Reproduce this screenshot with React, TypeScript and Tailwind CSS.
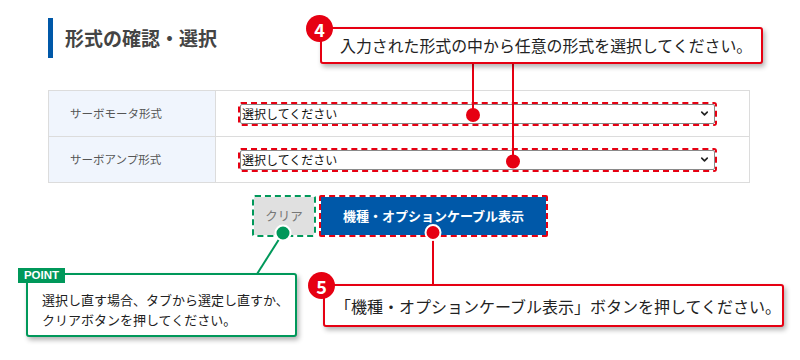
import { ChevronDown } from "lucide-react";

const rows = ["サーボモータ形式", "サーボアンプ形式"];

const FakeSelect = () => (
  <div className="w-[479px] h-[24px] border-2 border-dashed border-[#e60012] rounded-[3px] bg-white bg-clip-padding">
    <div className="h-full flex items-center justify-between border border-[#8a8a8a] rounded-[2px] pl-[1px] pr-[4px]">
      <span className="text-[12px] text-[#111] leading-none">選択してください</span>
      <ChevronDown size={11} strokeWidth={3.5} className="text-[#222]" />
    </div>
  </div>
);

const Badge = ({ n, className }: { n: string; className: string }) => (
  <div
    className={`absolute w-[27px] h-[27px] rounded-full bg-[#e60012] text-white text-[18px] font-bold flex items-center justify-center leading-none ${className}`}
  >
    {n}
  </div>
);

export default function App() {
  return (
    <div className="relative w-[800px] h-[360px] bg-white overflow-hidden font-['Noto_Sans_CJK_JP','Noto_Sans',sans-serif]">
      {/* heading */}
      <div className="pt-[18px] pl-[48px]">
        <div className="h-[40px] flex items-center border-l-[5px] border-[#0058a8] pl-[12px] text-[19px] font-bold text-[#444]">
          形式の確認・選択
        </div>
      </div>

      {/* table */}
      <div className="mt-[32px] ml-[48px] w-[702px] border border-[#dcdcdc]">
        {rows.map((label, i) => (
          <div key={label} className={`flex ${i === 0 ? "h-[46px] border-b border-[#dcdcdc]" : "h-[45px]"}`}>
            <div className="w-[167px] bg-[#f0f5fd] border-r border-[#dcdcdc] pl-[21px] flex items-center text-[11.5px] text-[#555]">
              {label}
            </div>
            <div className="flex-1 flex items-center pl-[22px]">
              <FakeSelect />
            </div>
          </div>
        ))}
      </div>

      {/* buttons */}
      <div className="mt-[12px] flex justify-center gap-[3px]">
        <div className="w-[64px] h-[42px] border-2 border-dashed border-[#00985a] rounded-[3px] bg-[#e0e0e0] bg-clip-padding flex items-center justify-center text-[12.5px] text-[#777]">
          クリア
        </div>
        <div className="w-[229px] h-[42px] border-2 border-dashed border-[#e60012] rounded-[2px] bg-[#0058a8] bg-clip-padding flex items-center justify-center text-[13px] font-bold text-white">
          機種・オプションケーブル表示
        </div>
      </div>

      {/* connectors */}
      <svg className="absolute inset-0 pointer-events-none" width="800" height="360" viewBox="0 0 800 360">
        <line x1="473" y1="62" x2="473" y2="114" stroke="#e60012" strokeWidth="2" />
        <line x1="513" y1="62" x2="513" y2="161" stroke="#e60012" strokeWidth="2" />
        <line x1="433" y1="233" x2="433" y2="285" stroke="#e60012" strokeWidth="2" />
        <line x1="283" y1="233" x2="257" y2="274" stroke="#00985a" strokeWidth="2" />
        <circle cx="473" cy="115" r="7" fill="#e60012" />
        <circle cx="513" cy="161.5" r="7" fill="#e60012" />
        <circle cx="433" cy="232.5" r="7.5" fill="#e60012" stroke="#fff" strokeWidth="2" />
        <circle cx="283" cy="233" r="7.5" fill="#00985a" stroke="#fff" strokeWidth="2" />
      </svg>

      {/* callout 4 */}
      <div className="absolute left-[320px] top-[27px] w-[443px] h-[37px] border-2 border-[#e60012] rounded-[3px] bg-white shadow-[2px_3px_5px_rgba(0,0,0,0.3)] flex items-center pl-[18px] text-[15.9px] text-[#222]">
        入力された形式の中から任意の形式を選択してください。
      </div>
      <Badge n="4" className="left-[306px] top-[15px]" />

      {/* callout 5 */}
      <div className="absolute left-[323px] top-[284px] w-[461px] h-[43px] border-2 border-[#e60012] rounded-[3px] bg-white shadow-[2px_3px_5px_rgba(0,0,0,0.3)] flex items-center pl-[10px] text-[16px] text-[#222]">
        「機種・オプションケーブル表示」ボタンを押してください。
      </div>
      <Badge n="5" className="left-[308px] top-[272px]" />

      {/* point */}
      <div className="absolute left-[26px] top-[273px] w-[271px] h-[64px] border-2 border-[#00985a] rounded-[3px] bg-white shadow-[2px_3px_5px_rgba(0,0,0,0.3)] pl-[14px] pt-[15px] text-[13px] leading-[20px] text-[#222]">
        選択し直す場合、タブから選定し直すか、
        <br />
        クリアボタンを押してください。
      </div>
      <div className="absolute left-[18px] top-[268px] w-[47px] h-[15px] bg-[#00985a] text-white text-[11.5px] font-bold flex items-center justify-center leading-none font-['Liberation_Sans',sans-serif]">
        POINT
      </div>
    </div>
  );
}
